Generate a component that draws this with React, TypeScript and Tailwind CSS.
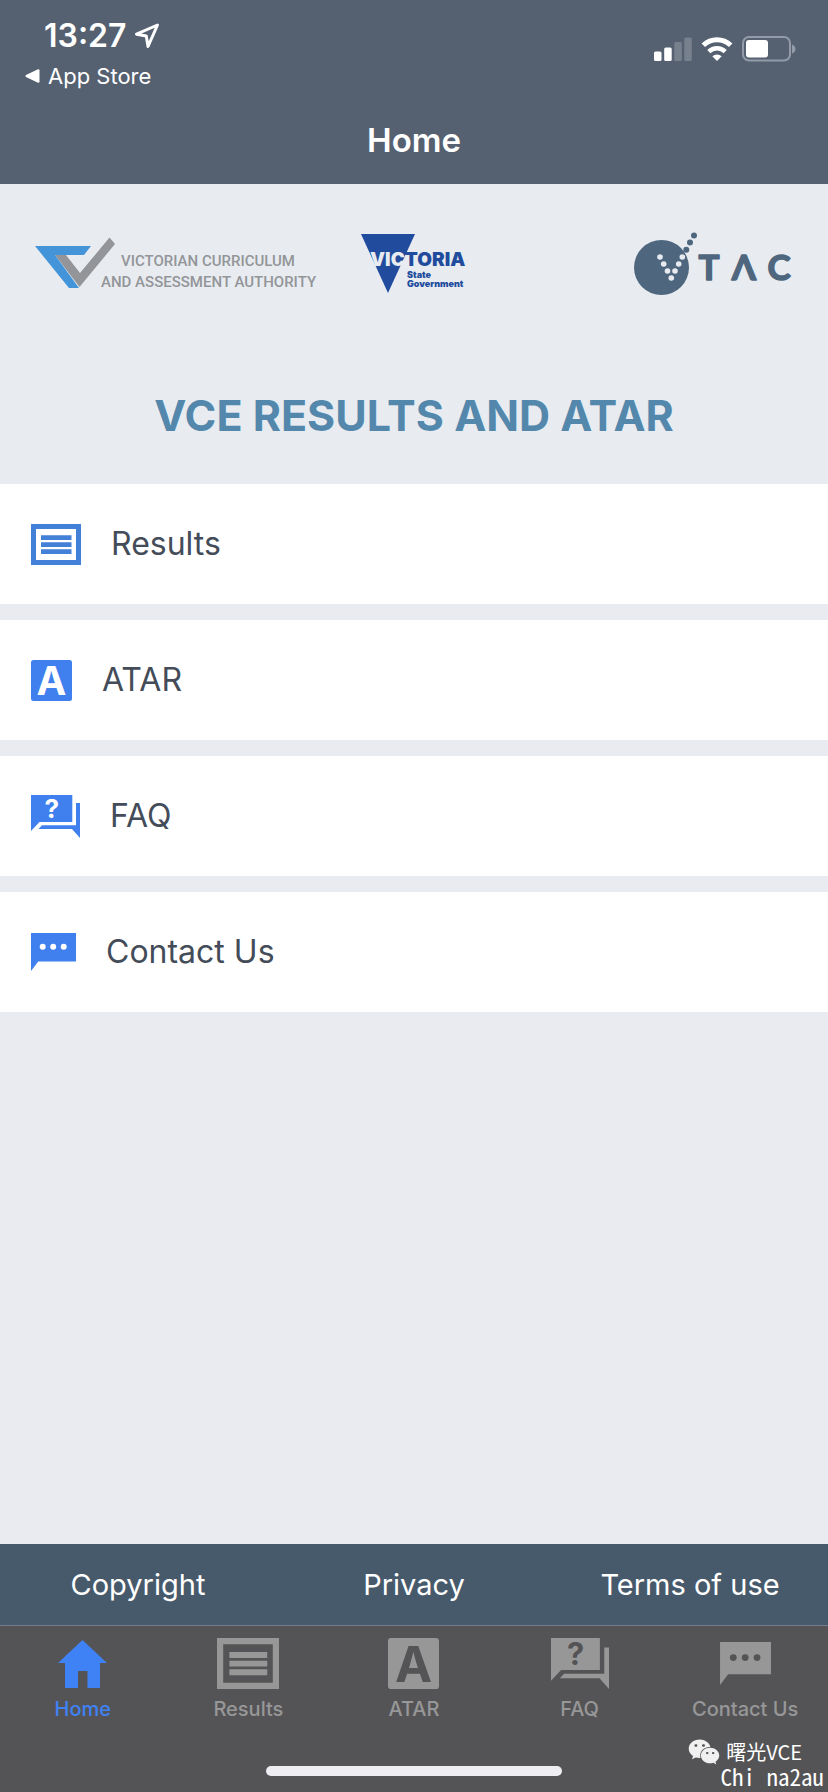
import React from 'react'
import { FaWeixin } from 'react-icons/fa'

type IconProps = { className?: string; cutout?: string }

function ResultsIcon({ className }: IconProps) {
  return (
    <svg viewBox="0 0 50 41" className={className} fill="currentColor" aria-hidden="true">
      <path fillRule="evenodd" d="M0 0H50V41H0ZM5 5V36H45V5Z" />
      <path d="M10 11.2H40.5V16H10ZM10 18.2H40.5V23H10ZM10 25.2H40.5V30H10Z" />
    </svg>
  )
}

function AtarIcon({ className, cutout = 'fill-white' }: IconProps) {
  return (
    <svg viewBox="0 0 41 41" className={className} fill="currentColor" overflow="visible" aria-hidden="true">
      <rect width="41" height="41" rx="2.5" />
      <text x="20.5" y="35" textAnchor="middle" fontSize="40" fontWeight="700" className={cutout}>
        A
      </text>
    </svg>
  )
}

function FaqIcon({ className, cutout = 'fill-white' }: IconProps) {
  return (
    <svg viewBox="0 0 49 43" className={className} fill="currentColor" overflow="visible" aria-hidden="true">
      <path d="M0 0H41.3V27H8.5L0 36Z" />
      <path d="M45 8H49V43L41 34H7.5L11 30.2H45Z" />
      <text x="20.7" y="23" textAnchor="middle" fontSize="26" fontWeight="700" className={cutout}>
        ?
      </text>
    </svg>
  )
}

function ContactIcon({ className, cutout = 'fill-white' }: IconProps) {
  return (
    <svg viewBox="0 0 45 38" className={className} fill="currentColor" aria-hidden="true">
      <path d="M0 0H45V28.5H7.2L0 38Z" />
      <g className={cutout}>
        <circle cx="11.7" cy="13.8" r="3" />
        <circle cx="22.2" cy="13.8" r="3" />
        <circle cx="32.7" cy="13.8" r="3" />
      </g>
    </svg>
  )
}

function HomeIcon({ className }: IconProps) {
  return (
    <svg viewBox="0 0 49 48" className={className} fill="currentColor" aria-hidden="true">
      <path d="M24.5 0L49 23H42V48H29.5V31H20V48H7V23H0Z" />
    </svg>
  )
}

function VcaaLogo() {
  return (
    <svg
      viewBox="0 1 288 52"
      className="h-[52px] w-[288px]"
      overflow="visible"
      role="img"
      aria-label="Victorian Curriculum and Assessment Authority"
    >
      <path d="M20 18H31L45 36L74.5 0.5L80 7L44.5 50Z" fill="#939598" />
      <path d="M0 9H56L49 18H20L44 51H34Z" fill="#4394d8" />
      <g fill="#939598" fontSize="15" fontWeight="500" fontFamily="Roboto, sans-serif">
        <text x="86" y="29">VICTORIAN CURRICULUM</text>
        <text x="66" y="50">AND ASSESSMENT AUTHORITY</text>
      </g>
    </svg>
  )
}

function VictoriaLogo() {
  return (
    <svg
      viewBox="0 0 104 60"
      className="h-[60px] w-[104px]"
      overflow="visible"
      role="img"
      aria-label="Victoria State Government"
    >
      <path d="M0 0H54L27 59Z" fill="#214b9c" />
      <text x="9" y="32" fontSize="19" fontWeight="900" fill="#214b9c">
        <tspan fill="#e8ecf1">VIC</tspan>TORIA
      </text>
      <g fill="#214b9c" fontSize="9" fontWeight="900">
        <text x="46" y="44">State</text>
        <text x="46" y="53">Government</text>
      </g>
    </svg>
  )
}

function VtacLogo() {
  return (
    <svg
      viewBox="0 0 156 63"
      className="h-[63px] w-[156px]"
      overflow="visible"
      role="img"
      aria-label="VTAC"
    >
      <g fill="#4f677e">
        <circle cx="27.5" cy="35.5" r="27.5" />
        <circle cx="60" cy="3.5" r="3" />
        <circle cx="56" cy="10.5" r="3" />
        <circle cx="52.3" cy="17.7" r="3" />
      </g>
      <g fill="#e8ecf1">
        <circle cx="26" cy="25" r="2.8" />
        <circle cx="29.7" cy="32" r="2.8" />
        <circle cx="33.5" cy="39" r="2.8" />
        <circle cx="37.3" cy="46" r="2.8" />
        <circle cx="41" cy="39" r="2.8" />
        <circle cx="44.7" cy="32" r="2.8" />
        <circle cx="48.3" cy="25" r="2.8" />
      </g>
      <g
        fill="#4f677e"
        stroke="#4f677e"
        strokeWidth="1.5"
        strokeLinejoin="round"
        fontSize="35"
        fontFamily="Lato, sans-serif"
        fontWeight="700"
        textAnchor="middle"
      >
        <text x="75" y="48">T</text>
        <text x="110" y="48">Λ</text>
        <text x="145" y="48">C</text>
      </g>
    </svg>
  )
}

const menu = [
  { label: 'Results', Icon: ResultsIcon, size: 'h-[41px] w-[50px] text-[#4380d8]' },
  { label: 'ATAR', Icon: AtarIcon, size: 'size-[41px] text-[#3f80ee]' },
  { label: 'FAQ', Icon: FaqIcon, size: 'h-[43px] w-[49px] text-[#3f80ee]' },
  { label: 'Contact Us', Icon: ContactIcon, size: 'h-[38px] w-[45px] text-[#3f80ee]' },
]

const tabs = [
  { label: 'Home', Icon: HomeIcon, size: 'h-12 w-[49px]', active: true },
  { label: 'Results', Icon: ResultsIcon, size: 'h-[51px] w-[62px]' },
  { label: 'ATAR', Icon: AtarIcon, size: 'size-[51px]' },
  { label: 'FAQ', Icon: FaqIcon, size: 'h-[51px] w-[58px]' },
  { label: 'Contact Us', Icon: ContactIcon, size: 'h-[43px] w-[51px]' },
]

const links = ['Copyright', 'Privacy', 'Terms of use']

function StatusBar() {
  return (
    <div className="flex items-start justify-between pt-4 pr-8 pl-6">
      <div>
        <div className="flex items-center gap-2 pl-5 text-[32px] leading-10 font-semibold">
          13:27
          <svg viewBox="0 0 26 26" className="size-[26px]" fill="none" aria-hidden="true">
            <path
              d="M23.5 2L2.5 11.2L12.3 13L14 23.5Z"
              stroke="currentColor"
              strokeWidth="3"
              strokeLinejoin="round"
            />
          </svg>
        </div>
        <a href="#" className="flex items-center gap-2 text-[22px] leading-10">
          <svg viewBox="0 0 16 16" className="size-4" fill="currentColor" aria-hidden="true">
            <path d="M2 7L14 1.3Q15.5 1 15.5 2.5V13.5Q15.5 15 14 14.7L2 9Q0.5 8 2 7Z" />
          </svg>
          App Store
        </a>
      </div>

      <div className="flex items-center gap-[9px] pt-5">
        <svg viewBox="0 0 38 24" className="h-6 w-[38px]" fill="currentColor" aria-hidden="true">
          <rect x="0" y="14.5" width="7.5" height="9.5" rx="1.5" />
          <rect x="10.2" y="10.5" width="7.5" height="13.5" rx="1.5" />
          <rect x="20.3" y="5" width="7.5" height="19" rx="1.5" opacity="0.2" />
          <rect x="30.3" y="0.5" width="7.5" height="23.5" rx="1.5" opacity="0.2" />
        </svg>
        <svg viewBox="0 0 32 24" className="h-6 w-8" fill="none" stroke="currentColor" aria-hidden="true">
          <path d="M2.3 8.2A20 20 0 0 1 29.7 8.2" strokeWidth="5" />
          <path d="M7.8 14.6A12 12 0 0 1 24.2 14.6" strokeWidth="4.5" />
          <path d="M16 24L11.3 19.3A7 7 0 0 1 20.7 19.3Z" fill="currentColor" stroke="none" />
        </svg>
        <svg viewBox="0 0 54 26" className="h-[26px] w-[54px]" aria-hidden="true">
          <rect x="1" y="1" width="47" height="23.5" rx="6" fill="none" stroke="#929ba7" strokeWidth="2" />
          <rect x="4" y="4" width="22" height="17.5" rx="3" fill="currentColor" />
          <path d="M50 8.5Q53.5 10 53.5 13T50 17.5Z" fill="#929ba7" />
        </svg>
      </div>
    </div>
  )
}

export default function App() {
  return (
    <div className="relative flex min-h-screen flex-col bg-[#e9ebf0] font-[Inter,'Liberation_Sans',sans-serif]">
      <header className="flex h-[184px] flex-col bg-[#556171] text-white">
        <StatusBar />
        <h1 className="pt-6 text-center text-[33px] leading-10 font-semibold">Home</h1>
      </header>

      <main className="flex-1">
        <div className="flex h-[300px] flex-col bg-[#e8ecf1] pt-12">
          <div className="flex items-center pr-[38px] pl-[35px]">
            <VcaaLogo />
            <div className="pl-[38px]">
              <VictoriaLogo />
            </div>
            <div className="ml-auto">
              <VtacLogo />
            </div>
          </div>
          <h2 className="pt-24 text-center text-[43px] leading-12 font-bold text-[#5388ac]">
            VCE RESULTS AND ATAR
          </h2>
        </div>

        <nav className="flex flex-col gap-4" aria-label="Menu">
          {menu.map(({ label, Icon, size }) => (
            <a
              key={label}
              href="#"
              className="flex h-[120px] items-center gap-[30px] bg-white px-[31px] text-[32px] text-[#434c58]"
            >
              <Icon className={size} />
              {label}
            </a>
          ))}
        </nav>
      </main>

      <footer>
        <div className="grid h-[81px] grid-cols-3 items-center bg-[#475a6c] text-center text-[29px] text-white">
          {links.map((label) => (
            <a key={label} href="#">
              {label}
            </a>
          ))}
        </div>

        <div className="border-t border-[#737c8a] bg-[#545456] pb-4">
          <nav className="grid grid-cols-5 pt-3" aria-label="Tabs">
            {tabs.map(({ label, Icon, size, active }) => (
              <a
                key={label}
                href="#"
                className={
                  active
                    ? 'flex flex-col items-center gap-2 text-[#3f82f5]'
                    : 'flex flex-col items-center gap-2 text-[#979798]'
                }
              >
                <span className="flex h-[51px] items-center">
                  <Icon className={size} cutout="fill-[#545456]" />
                </span>
                <span className="text-[20px] leading-6 font-medium">{label}</span>
              </a>
            ))}
          </nav>
          <div className="mx-auto mt-[45px] h-[10px] w-[296px] rounded-full bg-[#eeedf2]" />
        </div>
      </footer>

      {/* Channel watermark */}
      <div className="absolute right-1 bottom-0 flex flex-col items-end font-['Noto_Sans_CJK_SC',sans-serif] text-white">
        <div className="-mb-2 flex items-center gap-[6px] pr-[22px] text-[20px] leading-7">
          <FaWeixin className="size-8 text-[#f0f0f0]" />
          曙光VCE
        </div>
        <div className="text-[23px] leading-8 [font-feature-settings:'hwid']">Chi na2au</div>
      </div>
    </div>
  )
}
